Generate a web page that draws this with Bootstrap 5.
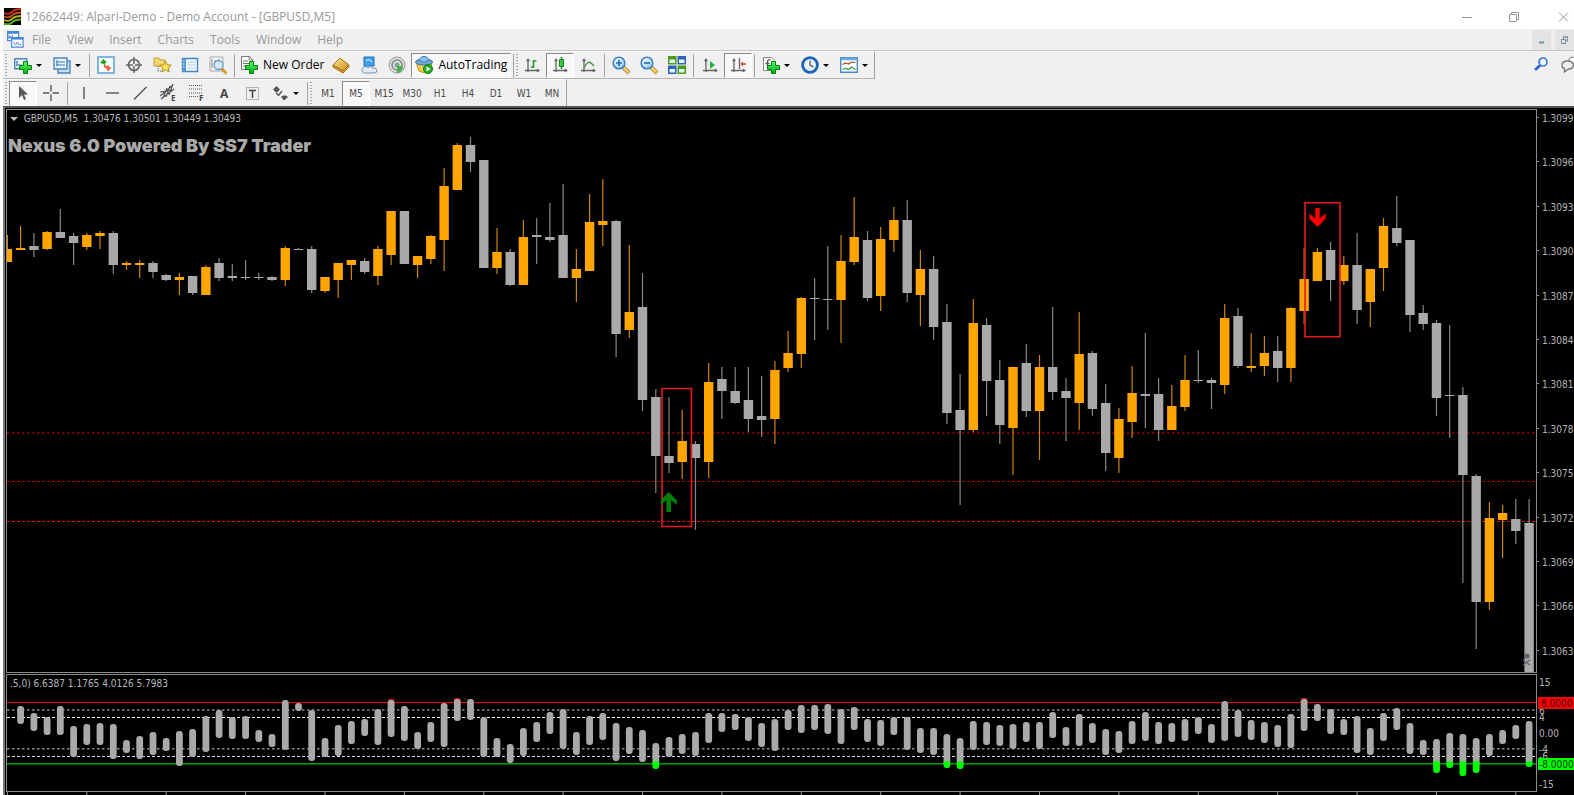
<!DOCTYPE html>
<html lang="en">
<head>
<meta charset="utf-8">
<meta name="viewport" content="width=device-width, initial-scale=1">
<title>12662449: Alpari-Demo - Demo Account - [GBPUSD,M5]</title>
<link rel="stylesheet" href="https://cdn.jsdelivr.net/npm/bootstrap@5.3.0/dist/css/bootstrap.min.css">
<style>
  body { font-family: "Open Sans", "Noto Sans", sans-serif; font-size: 12px; line-height: 16px; background: #fff; color: #000; overflow: hidden; }
  button { background: transparent; border: 0; padding: 0; color: inherit; }
  svg { display: block; flex: none; }
  .titlebar { height: 29px; padding: 4px 2px 0 4px; color: #999; }
  .titlebar h1 { font-size: 12px; line-height: 24px; margin: 0; font-weight: 400; }
  .win-btn { width: 16px; height: 24px; }
  .workspace { margin-left: 3px; background: #f0f0f0; }
  .menubar { height: 21px; color: #999; padding-left: 4px; }
  .menubar a { color: inherit; text-decoration: none; }
  .menu-items { gap: 16px; padding-left: 8px; }
  .mdi-btn { width: 19px; height: 20px; background: #e3e3e3; }
  .mdi-btn.clipped { width: 3px; }
  .tool-area { border-top: 1px solid #c6c6c6; }
  .toolbar { height: 28px; padding-left: 4px; border-right: 1px solid #a0a0a0; border-top: 1px solid #fafafa; }
  .toolbar.upper { border-bottom: 1px solid #b4b4b4; }
  .toolbar.lower { height: 27px; }
  .grip { width: 2px; height: 22px; background: repeating-linear-gradient(#a8a8a8 0 1px, transparent 1px 3px); margin: 0 2px 0 -2px; }
  .tool { width: 28px; height: 26px; display: flex; align-items: center; justify-content: center; }
  .tool svg { overflow: visible; }
  .tool.wide { width: auto; padding: 0 3px; gap: 5px; font-size: 12px; }
  .tool.chat { width: 13px; justify-content: flex-start; overflow: hidden; }
  .tool.find { margin-right: 6px; }
  .tool.active, .tool.on { background: repeating-conic-gradient(#fff 0 25%, #f2f2f2 0 50%) 0 0 / 2px 2px; border: 1px solid #fff; border-top-color: #8c8c8c; border-left-color: #8c8c8c; height: 25px; }
  .caret { width: 11px; height: 26px; display: flex; align-items: center; }
  .caret::before { content: ""; border: 3px solid transparent; border-top-color: #000; border-bottom: 0; margin-left: -1px; }
  .divide { width: 1px; height: 23px; background: #a3a3a3; margin: 0 2px; }
  .period { font-family: "DejaVu Sans Condensed", "DejaVu Sans", sans-serif; font-size: 10px; color: #4a4a4a; padding-top: 2px; }
  .chart-frame { background: #000; border-top: 2px solid #555; border-left: 2px solid #777; padding: 1px 0 0 1px; overflow: hidden; }
  .pane { display: grid; grid-template-columns: minmax(0, 1fr) 37px; margin-bottom: 1px; position: relative; }
  .plot { border: 1px solid #8c8c8c; }
  .plot svg, .axis svg { width: 100%; }
  .caption { position: absolute; font-family: "DejaVu Sans Condensed", "DejaVu Sans", sans-serif; font-size: 10px; color: #b8b8b8; top: 2px; left: 4px; white-space: pre; }
  .caption svg { display: inline-block; }
  .headline { position: absolute; left: 2px; top: 25px; font-family: "Inter", "Liberation Sans", sans-serif; font-weight: 900; font-size: 18px; line-height: 24px; color: #a9a9a9; }
  .axis text { font-family: "DejaVu Sans Condensed", "DejaVu Sans", sans-serif; font-size: 10px; fill: #b4b4b4; }
  .axis .on-red { fill: #300; }
  .axis .on-green { fill: #030; }
</style>
</head>
<body>
<svg width="0" height="0" class="position-absolute" aria-hidden="true">
  <defs>
    <linearGradient id="gp" x2="0" y2="1"><stop offset="0" stop-color="#5f6"/><stop offset="1" stop-color="#0a1"/></linearGradient>
    <linearGradient id="gold" x2="1" y2="1"><stop offset="0" stop-color="#ffe9a0"/><stop offset="1" stop-color="#c98a10"/></linearGradient>
    <linearGradient id="lens" x2="1" y2="1"><stop offset="0" stop-color="#fff"/><stop offset="1" stop-color="#8cc8f5"/></linearGradient>
    <path id="plus" d="M4 0h4v4h4v4h-4v4h-4v-4h-4v-4h4z" fill="url(#gp)" stroke="#0a7d10"/>
    <g id="axes" stroke="#666" fill="none" stroke-width="1.3"><path d="M4 2v13M1 13.500h14"/><path d="M2.500 4L4 1.500 5.500 4zM13 12l2.500 1.500L13 15z" fill="#666" stroke-width=".6"/></g>
    <g id="mag"><path d="M11 11l6 6" stroke="#b9892b" stroke-width="4"/><path d="M11.500 11.500l5 5" stroke="#ffd97a" stroke-width="2"/><circle cx="7" cy="7" r="5.800" fill="url(#lens)" stroke="#3b83c4" stroke-width="1.600"/></g>
  </defs>
</svg>

<header class="titlebar d-flex align-items-center">
  <svg class="me-1" width="17" height="17" viewBox="0 0 17 17"><path d="M0 0h17v17H0z"/><g fill="none" stroke-width="1.800"><path d="M0 5q5 2 8-1t9-3" stroke="#e02b14"/><path d="M0 8.500q5 2 8-1t9-3" stroke="#c8501a"/><path d="M0 12q5 2 8-1t9-3" stroke="#b5b01c"/><path d="M0 15.500q5 2 8-1t9-3" stroke="#5cb018"/></g></svg>
  <h1>12662449: Alpari-Demo - Demo Account - [GBPUSD,M5]</h1>
  <div class="ms-auto d-flex gap-4">
    <button class="win-btn me-2" aria-label="Minimize"><svg width="12" height="24"><path d="M2 12.500h10" stroke="#999"/></svg></button>
    <button class="win-btn me-2" aria-label="Restore"><svg width="12" height="24"><path d="M1.500 9.500h7v7h-7zM3.500 9.500v-2h7v7h-2" fill="none" stroke="#999"/></svg></button>
    <button class="win-btn" aria-label="Close"><svg width="16" height="24"><path d="M3 7.500l9 9M12 7.500l-9 9" stroke="#999"/></svg></button>
  </div>
</header>

<main class="workspace">
  <nav class="menubar d-flex align-items-center" aria-label="Main menu">
    <svg width="17" height="17" viewBox="0 0 17 17"><g fill="#fff" stroke="#4a86dc" stroke-width="1.200"><path d="M.6.6h11v9h-11z"/><path d="M.6 1.800h11" stroke-width="2"/><path d="M2 8V5l2 2 2-3" fill="none"/><path d="M4.600 6.600h11.500v9.500H4.600z"/><path d="M4.600 7.600h11.500" stroke-width="2"/><path d="M6.500 11l2 3 2-3 1.500 3 2-1" fill="none" stroke-width="1"/></g></svg>
    <div class="menu-items d-flex">
      <a href="#">File</a><a href="#">View</a><a href="#">Insert</a><a href="#">Charts</a><a href="#">Tools</a><a href="#">Window</a><a href="#">Help</a>
    </div>
    <div class="ms-auto d-flex gap-1 overflow-hidden">
      <button class="mdi-btn" aria-label="Minimize chart"><svg width="19" height="20"><path d="M7 12.500h5" stroke="#7890a0" stroke-width="2"/></svg></button>
      <button class="mdi-btn" aria-label="Restore chart"><svg width="19" height="20"><path d="M6.500 9.500h4v4h-4zM8.500 9v-2h4v4h-2M6 9.500h5M8 7h5" fill="none" stroke="#7890a0"/></svg></button>
    </div>
  </nav>

  <div class="tool-area">
    <div class="d-flex align-items-start">
      <div class="toolbar upper d-flex align-items-center">
        <span class="grip"></span>
        <button class="tool" aria-label="New chart"><svg width="18" height="18"><path d="M.7 2.700h12v10h-12z" fill="#eaf4fd" stroke="#4a86bd" stroke-width="1.400"/><path d="M3 5v5M2 9h6M2 6h2" stroke="#3a76ad" fill="none"/><use href="#plus" x="5.500" y="5.500"/></svg></button><button class="caret" aria-label="Chart list"></button>
        <button class="tool" aria-label="Profiles"><svg width="18" height="18"><path d="M5 5h12v12H5z" fill="#c9e0f5" stroke="#4a86bd" stroke-width="1.400"/><path d="M1 2h13v11H1z" fill="#eaf4fd" stroke="#4a86bd" stroke-width="1.400"/><path d="M4 4v6M3 9h9M3 6h9" stroke="#3a76ad"/></svg></button><button class="caret" aria-label="Profile list"></button>
        <span class="divide"></span>
        <button class="tool" aria-label="Market Watch"><svg width="18" height="18"><path d="M1 1h16v16H1z" fill="#f6fbff" stroke="#5aa0d8" stroke-width="1.500"/><path d="M6.500 3l3.500 3.500-2 .5v2.500l-2.500-2-2.500-.5z" fill="#1ca31c"/><path d="M11 15.500l3.500-4-2.500-.5V9l-2 1-3-1.500v3l2 .5z" fill="#e8622c"/></svg></button>
        <button class="tool" aria-label="Data Window"><svg width="18" height="18"><circle cx="9" cy="9" r="5.500" fill="none" stroke="#666" stroke-width="1.600"/><path d="M9 1v7M9 10v7M1 9h7M10 9h7" stroke="#666" stroke-width="1.500"/></svg></button>
        <button class="tool" aria-label="Navigator"><svg width="19" height="18"><path d="M1 2h5l1 2h5v6H1z" fill="#f5d774" stroke="#c39a2a"/><path d="M5 10v6M5 15h4" stroke="#666" stroke-dasharray="1 1"/><path d="M12.500 5l1.700 3.800 4.100.4-3.100 2.700.9 4.100-3.600-2.200L8.900 16l.9-4.100-3.100-2.700 4.100-.4z" fill="#ffe15a" stroke="#b58a12"/></svg></button>
        <button class="tool" aria-label="Terminal"><svg width="18" height="18"><path d="M1.500 2.500h15v13h-15z" fill="#f2f8fd" stroke="#3f86c6" stroke-width="1.400"/><path d="M1 2h4v14H1z" fill="#4b92d2"/><path d="M2 5h1.500M2 8h1.500M2 11h1.500" stroke="#fff"/><path d="M7 6h8M7 9h8M7 12h8" stroke="#b7d0e5"/></svg></button>
        <button class="tool" aria-label="Strategy Tester"><svg width="19" height="18"><path d="M1 1h13v14H1z" fill="#f2f2f2" stroke="#aaa"/><path d="M3 3v9M6 4v5M10 3v5" stroke="#888"/><path d="M12.500 12.500l5 5" stroke="#d49b28" stroke-width="2.800"/><circle cx="9.500" cy="9" r="4.500" fill="#cfe6fa" fill-opacity=".8" stroke="#6b9fc9" stroke-width="1.300"/></svg></button>
        <span class="divide"></span>
        <button class="tool wide"><svg width="18" height="18"><path d="M1.500.5h8l3 3v10h-11z" fill="#fff" stroke="#777"/><path d="M9 0v4h4M3 5h5M3 7.500h7M3 10h4" stroke="#777" fill="none"/><use href="#plus" x="5.500" y="5.500"/></svg>New Order</button>
        <button class="tool" aria-label="MetaEditor"><svg width="18" height="18"><path d="M1 9l7-7 9 7-6 6z" fill="url(#gold)" stroke="#a87410"/><path d="M1 9v2l10 6 6-6V9l-6 6z" fill="#e8b23c" stroke="#a06c0c"/></svg></button>
        <button class="tool" aria-label="VPS"><svg width="18" height="18"><path d="M4 1h10v9H4z" fill="#3f9fe8" stroke="#1d74bd"/><path d="M6 5q3-3 6 1" stroke="#fff" fill="none"/><path d="M4 17a3.200 3.200 0 0 1 0-6q2-1 4 .5 3-2 5 .5 4 0 4 2.500T14 17z" fill="#e3ecf6" stroke="#7d94b3"/></svg></button>
        <button class="tool" aria-label="Signals"><svg width="18" height="18" fill="none"><circle cx="9" cy="9" r="8" fill="#dcdcdc" stroke="#9a9a9a"/><circle cx="9" cy="9" r="5" stroke="#888" stroke-width="1.500"/><circle cx="9" cy="9" r="2.500" fill="#7a9"/><path d="M9 10v7q6-1 6-7z" fill="#4fae50"/></svg></button>
        <button class="tool wide on" aria-pressed="true"><svg width="18" height="18"><path d="M1 6l3 9 6 2 6-6 1-5z" fill="#f3cf52" stroke="#bb8d18"/><ellipse cx="9" cy="6" rx="8.500" ry="3" fill="#6ea9da" stroke="#37739f"/><path d="M4.500 5q0-4.500 4.500-4.500T13.500 5q-4 2-9 0z" fill="#8cc2ea" stroke="#3c7cad"/><circle cx="13" cy="13" r="4.500" fill="#22b022" stroke="#0e7e12"/><path d="M11.500 10.500v5l4-2.500z" fill="#fff"/></svg>AutoTrading</button>
        <span class="divide"></span><span class="grip ms-0 me-0"></span>
        <button class="tool" aria-label="Bar chart"><svg width="16" height="17"><use href="#axes"/><path d="M9.500 3v8M9.500 4h3M7 10h2.500" stroke="#1d9a2a" stroke-width="1.600"/></svg></button>
        <button class="tool active" aria-label="Candlesticks" aria-pressed="true"><svg width="16" height="17"><use href="#axes"/><path d="M9.500 0v12" stroke="#14801e" stroke-width="1.400"/><path d="M7.500 2.500h4v7h-4z" fill="#2fce3e" stroke="#14801e"/></svg></button>
        <button class="tool" aria-label="Line chart"><svg width="16" height="17"><use href="#axes"/><path d="M4 11q4-8 7-5l3 3" fill="none" stroke="#3f9a44" stroke-width="1.500"/></svg></button>
        <span class="divide"></span>
        <button class="tool" aria-label="Zoom in"><svg width="18" height="18"><use href="#mag"/><path d="M4 7h6M7 4v6" stroke="#2a70b4" stroke-width="1.700"/></svg></button>
        <button class="tool" aria-label="Zoom out"><svg width="18" height="18"><use href="#mag"/><path d="M4 7h6" stroke="#2a70b4" stroke-width="1.700"/></svg></button>
        <button class="tool" aria-label="Tile windows"><svg width="18" height="18"><path d="M0 0h8.500v8.500H0zM9.500 9.500H18V18H9.500z" fill="#4a9c1a"/><path d="M9.500 0H18v8.500H9.500zM0 9.500h8.500V18H0z" fill="#2a63b8"/><path d="M1.500 3.500h5.500v3.500H1.500zM11 3.500h5.500v3.500H11zM1.500 13h5.500v3.500H1.500zM11 13h5.500v3.500H11z" fill="#e6f2ee"/></svg></button>
        <span class="divide"></span>
        <button class="tool" aria-label="Auto scroll"><svg width="16" height="17"><use href="#axes"/><path d="M8 4l5 4-5 4z" fill="#25b53a"/></svg></button>
        <button class="tool active" aria-label="Chart shift" aria-pressed="true"><svg width="16" height="17"><use href="#axes"/><path d="M9.500 1v11" stroke="#666" stroke-width="1.400"/><path d="M10.500 7L13 4.500v5zM13 6.300h3v1.500h-3z" fill="#c9481a"/></svg></button>
        <span class="divide"></span>
        <button class="tool" aria-label="Indicators"><svg width="18" height="18"><path d="M1.500 1.500h8l3 3v10h-11z" fill="#fff" stroke="#888"/><path d="M8.500 4q-3-1-3 2v6M3.500 7.500h4" stroke="#555" fill="none" stroke-width="1.300"/><use href="#plus" x="5.500" y="5.500"/></svg></button><button class="caret" aria-label="Indicator list"></button>
        <button class="tool" aria-label="Periods"><svg width="18" height="18"><circle cx="9" cy="9" r="7.400" fill="#eaf4ff" stroke="#1b62b8" stroke-width="2.800"/><path d="M9 4.500V9l3.500 2" stroke="#555" fill="none" stroke-width="1.300"/></svg></button><button class="caret" aria-label="Period list"></button>
        <button class="tool" aria-label="Templates"><svg width="18" height="18"><path d="M.7 1.700h16.600v14.600H.7z" fill="#fff" stroke="#4a8cc8" stroke-width="1.400"/><path d="M1 3h16" stroke="#6aaae0" stroke-width="2.500"/><path d="M2.500 8.500l3-1.500 3 1 3-2 4 .500" stroke="#b5442a" fill="none" stroke-width="1.200"/><path d="M2.500 13.500l3-1 3 1 3-2.500 4 2.500" stroke="#2f9a3a" fill="none" stroke-width="1.200"/></svg></button><button class="caret" aria-label="Template list"></button>
      </div>
      <div class="ms-auto d-flex">
        <button class="tool find" aria-label="Search"><svg width="16" height="18"><circle cx="10" cy="7" r="4" fill="#eef6ff" stroke="#3f7fd0" stroke-width="1.700"/><path d="M7 10.500l-5 4.500" stroke="#2c68c4" stroke-width="3"/></svg></button>
        <button class="tool chat" aria-label="Chat"><svg width="22" height="18"><path d="M8 8V5q0-3 6-3t6 5" fill="#fff" stroke="#777"/><path d="M1 10.500q0-4 4.500-4.500t7 3q0 5-5 5l-4 3v-3.500q-2.500-.5-2.500-3z" fill="#eee" stroke="#777" stroke-width="1.300"/></svg></button>
      </div>
    </div>
    <div class="d-flex">
      <div class="toolbar lower d-flex align-items-center">
        <span class="grip"></span>
        <button class="tool active" aria-label="Cursor" aria-pressed="true"><svg width="16" height="16"><path d="M4 1v12l3-3 2 5 2-1-2-4.500h4z" fill="#555"/></svg></button>
        <button class="tool" aria-label="Crosshair"><svg width="16" height="16"><path d="M8 0v6.500M8 9.500V16M0 8h6.500M9.500 8H16" stroke="#555" stroke-width="1.400"/></svg></button>
        <span class="divide"></span>
        <button class="tool" aria-label="Vertical line"><svg width="16" height="16"><path d="M8 2v12" stroke="#555" stroke-width="1.400"/></svg></button>
        <button class="tool" aria-label="Horizontal line"><svg width="16" height="16"><path d="M2 8h13" stroke="#555" stroke-width="1.400"/></svg></button>
        <button class="tool" aria-label="Trendline"><svg width="16" height="16"><path d="M2 14.500L14.500 2" stroke="#555" stroke-width="1.400"/></svg></button>
        <button class="tool" aria-label="Equidistant channel"><svg width="18" height="18"><path d="M1 12L13 2M2 15L15 5M4 14l4-10M7 13l4-11M10 11l4-11M1 8l12-2" stroke="#555" stroke-width="1.200"/><text x="12" y="17" font-size="8" font-weight="700" fill="#444">E</text></svg></button>
        <button class="tool" aria-label="Fibonacci retracement"><svg width="18" height="18"><path d="M2 1.500h14M2 5h14M2 9h14M2 12.500h9" stroke="#555" stroke-width="1.200" stroke-dasharray="1 1"/><text x="12" y="17" font-size="8" font-weight="700" fill="#444">F</text></svg></button>
        <button class="tool" aria-label="Text"><svg width="16" height="16"><text x="4" y="13" font-size="12" font-weight="700" fill="#444">A</text></svg></button>
        <button class="tool" aria-label="Text label"><svg width="16" height="16"><path d="M2.500 2.500h12v12h-12z" fill="none" stroke="#777" stroke-dasharray="1 1"/><path d="M5 5.500h7M8.500 5v8" stroke="#444" stroke-width="1.500" fill="none"/></svg></button>
        <button class="tool" aria-label="Arrows"><svg width="16" height="16"><path d="M4.500 1L8 4.500 5.500 7H3.500L1 4.500zM12 15.500l-3-3.500 2-1.500h3l2 1.500z" fill="#555"/><path d="M4 7.500l2.500 3 3.500-4.500" stroke="#555" stroke-width="1.300" fill="none"/></svg></button><button class="caret" aria-label="Arrow list"></button>
        <span class="divide"></span><span class="grip ms-0"></span>
        <button class="tool period">M1</button><button class="tool period active">M5</button><button class="tool period">M15</button><button class="tool period">M30</button><button class="tool period">H1</button><button class="tool period">H4</button><button class="tool period">D1</button><button class="tool period">W1</button><button class="tool period">MN</button>
      </div>
    </div>
  </div>

  <section class="chart-frame" aria-label="GBPUSD,M5 chart">
    <div class="pane">
      <div class="plot"><svg id="price" height="562" viewBox="7 110 1529 562" preserveAspectRatio="none"></svg></div>
      <div class="axis"><svg id="priceAxis" height="564" viewBox="1537 109 37 564"></svg></div>
      <div class="caption"><svg width="8" height="6"><path d="M0 1h8L4 5z" fill="#bbb"/></svg>  GBPUSD,M5  1.30476 1.30501 1.30449 1.30493</div>
      <div class="headline">Nexus 6.0 Powered By SS7 Trader</div>
    </div>
    <div class="pane mb-0">
      <div class="plot"><svg id="osc" height="116" viewBox="7 675 1529 116" preserveAspectRatio="none"></svg></div>
      <div class="axis"><svg id="oscAxis" height="118" viewBox="1537 674 37 118"></svg></div>
      <div class="caption">.5,0) 6.6387 1.1765 4.0126 5.7983</div>
    </div>
    <svg id="ticks" class="w-100" height="3" viewBox="6 792 1568 3" preserveAspectRatio="none"></svg>
  </section>
</main>

<script>
// Each candle: direction, high, body top, body bottom, low
const candles = `O235 249 262 262,O226 248 250 250,G233 246 250 257,O231 232 249 250,G209 232 238 238,G233 236 243 265,O233 235 247 250,O231 233 236 249,G231 233 265 274,O261 263 265 270,O260 263 265 278,G261 263 272 278,G274 275 280 281,O273 277 280 295,G276 276 293 295,O265 267 295 295,G258 263 278 281,G264 276 278 281,G260 277 278 280,G273 277 278 280,G276 277 280 281,O246 248 280 286,G248 249 250 250,G246 249 290 293,O277 277 291 293,O263 263 280 298,O260 260 265 280,G258 261 272 274,O246 249 276 285,O211 211 255 265,G211 211 264 264,O256 256 265 278,O235 236 259 264,O168 186 240 271,O143 145 190 190,G137 145 162 172,G160 160 268 268,O228 252 268 274,G249 252 285 286,O220 237 285 285,G218 235 237 264,G203 237 240 242,G184 235 278 278,O249 269 278 302,O194 222 271 271,O179 221 225 246,G220 221 334 357,O245 312 330 338,G273 307 400 411,G389 397 456 493,G397 456 463 473,O410 441 462 479,G441 444 458 530,O363 382 462 478,G367 379 391 419,G367 391 403 404,G367 400 419 432,G376 416 420 437,O361 370 419 444,O331 353 368 372,O297 298 354 368,G278 298 299 340,G246 299 300 330,O235 261 300 343,O197 237 262 265,G231 240 298 301,O227 239 296 311,O207 220 240 252,G200 220 293 302,O250 269 295 326,G256 269 327 340,G304 322 413 424,G374 410 430 505,O299 323 430 432,G318 325 381 416,G360 380 425 444,O367 367 428 475,G344 363 411 417,O355 367 411 460,G307 367 392 400,G378 391 398 441,O312 354 403 430,G351 353 409 416,G384 403 453 471,O408 419 458 473,O366 393 422 438,G333 394 396 428,G378 394 430 441,O385 406 430 430,O355 380 407 411,G350 380 381 383,G378 380 383 409,O304 318 385 394,G308 316 366 368,O333 366 368 372,O336 353 366 376,G336 351 368 382,O307 308 368 382,O248 279 311 324,O248 252 281 281,G242 250 280 301,O256 265 281 285,G233 265 310 324,O269 269 302 327,O218 226 268 291,G196 228 243 246,G240 240 315 332,G305 313 324 330,G320 323 398 416,G325 395 396 438,G387 395 475 583,G474 476 602 649,O502 518 602 610,O505 513 520 558,G499 519 531 544,G499 523 673 673`.split(',');
// Oscillator ranges, one per candle starting from the second
const ranges = `706 724,713 731,717 735,706 735,726 757,724 745,723 745,724 759,740 753,736 759,732 755,738 751,731 766,729 757,716 752,710 738,717 739,716 739,730 742,734 747,700 750,703 711,710 761,738 757,725 756,721 744,719 736,709 745,699 737,706 741,732 749,722 742,703 747,698 721,699 720,717 757,738 757,744 763,728 756,722 742,712 734,709 749,732 755,716 745,713 740,723 761,727 754,730 762,743 769,737 757,734 754,732 756,713 743,713 732,714 730,717 741,723 747,719 751,710 730,705 733,705 730,704 734,709 744,707 730,719 742,720 746,717 735,717 750,728 753,728 755,734 768,738 769,721 750,722 745,725 746,724 749,722 742,722 749,712 738,727 746,714 746,723 743,729 755,731 753,721 744,712 741,722 744,723 742,719 741,717 734,724 743,701 741,710 737,720 740,722 743,725 747,714 748,698 731,704 721,709 734,719 735,716 753,728 755,713 741,708 730,723 754,740 755,739 773,733 768,734 776,738 773,734 756,730 744,725 739,721 767`.split(',');
const redCaps = [29, 34, 98], greenCaps = [49, 71, 72, 108, 109, 110, 111, 115];
const X = i => +(7.4 + 13.232 * i).toFixed(1);
const line = (y, c, w, dash) => `<path d="M7 ${y}H1537" stroke="${c}" stroke-width="${w}" ${dash ? `stroke-dasharray="${dash}"` : ''}/>`;

let s = line(433, '#6e0000', 2, '2.500 2.500') + line(481.5, '#a80000', 1, '3 2') + line(521.5, '#e01414', 1, '3 2');
candles.forEach((d, i) => {
  const [h, t, b, l] = d.slice(1).split(' ').map(Number), c = d[0] === 'O' ? '#ffa500' : '#a9a9a9', x = X(i);
  s += `<path d="M${x} ${h}V${l}" stroke="${c}" stroke-opacity=".8" stroke-width="1.200"/><rect x="${(x - 4.7).toFixed(1)}" y="${t}" width="9.400" height="${Math.max(b - t, 1)}" fill="${c}"/>`;
});
s += `<g fill="none" stroke="#e6191f" stroke-width="1.600"><path d="M662 388.500h29.500v138H662zM1305 202.700h35v134H1305z"/></g>
<path d="M668.700 492l8 8v5l-5.700-5v12h-4.600v-12l-5.700 5v-5z" fill="#008000"/>
<path d="M1317.500 227l8.200-8.500v-5l-6 5V208h-4.400v10.500l-6-5v5z" fill="#f00"/>
<circle cx="1527" cy="656" r="2.500" fill="#62626c"/><path d="M1523 660l7 5M1530 660l-7 5" stroke="#62626c" stroke-width="1.200"/>`;
price.innerHTML = s;

s = line(710, '#8a8a8a', 1.5, '2.500 2.500') + line(717.5, '#fff', 1, '3 2') + line(748.7, '#8a8a8a', 1.5, '2.500 2.500') + line(756.5, '#ddd', 1, '3 2');
s += line(702.5, '#f00000', 1.2) + line(763.7, '#00a000', 1.4);
ranges.forEach((d, k) => {
  const i = k + 1, [t, b] = d.split(' ').map(Number), x = X(i);
  const pill = (y, h, c) => `<rect x="${(x - 3.4).toFixed(1)}" y="${y}" width="6.800" height="${h}" rx="3" fill="${c}"/>`;
  if (redCaps.includes(i)) s += pill(t, 8, '#f00') + pill(t + 1, b - t - 1, '#a9a9a9');
  else if (greenCaps.includes(i)) s += pill(t, 766 - t, '#a9a9a9') + pill(761, b - 761, '#0f0');
  else s += pill(t, b - t, '#a9a9a9');
});
osc.innerHTML = s;

s = '';
for (let k = 0; k < 13; k++) {
  const y = 118 + 44.4 * k;
  s += `<path d="M1536 ${Math.round(y) - .5}h3" stroke="#999"/><text x="1542" y="${Math.round(y + 4)}">${(1.3099 - k * .0003).toFixed(4)}</text>`;
}
priceAxis.innerHTML = s;

const lab = (t, y) => `<text x="1539" y="${y}">${t}</text>`;
oscAxis.innerHTML = lab('15', 686) + lab('6', 714) + lab('4', 721) + lab('0.00', 737) + lab('-4', 753) + lab('-6', 760) + lab('-15', 788) +
  `<path d="M1538 697h36v12h-36z" fill="#f00"/><path d="M1538 758h36v12h-36z" fill="#0f0"/>` +
  `<text class="on-red" x="1541" y="707">8.0000</text><text class="on-green" x="1539" y="768">-8.0000</text>`;

s = '';
for (let i = 0; i < 116; i += 6) s += `<path d="M${X(i)} 792v3" stroke="#999"/>`;
ticks.innerHTML = s;
</script>
<script src="https://cdn.jsdelivr.net/npm/bootstrap@5.3.0/dist/js/bootstrap.bundle.min.js"></script>
</body>
</html>
